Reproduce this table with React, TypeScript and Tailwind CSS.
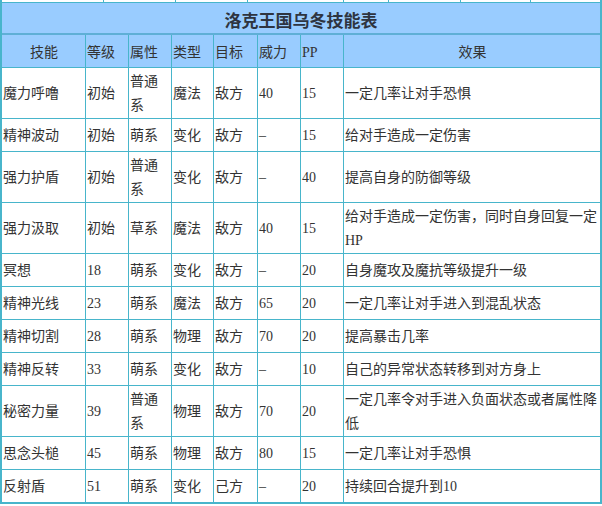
import React from 'react';

const rows: string[][] = [
  ['魔力呼噜', '初始', '普通系', '魔法', '敌方', '40', '15', '一定几率让对手恐惧'],
  ['精神波动', '初始', '萌系', '变化', '敌方', '–', '15', '给对手造成一定伤害'],
  ['强力护盾', '初始', '普通系', '变化', '敌方', '–', '40', '提高自身的防御等级'],
  ['强力汲取', '初始', '草系', '魔法', '敌方', '40', '15', '给对手造成一定伤害，同时自身回复一定HP'],
  ['冥想', '18', '萌系', '变化', '敌方', '–', '20', '自身魔攻及魔抗等级提升一级'],
  ['精神光线', '23', '萌系', '魔法', '敌方', '65', '20', '一定几率让对手进入到混乱状态'],
  ['精神切割', '28', '萌系', '物理', '敌方', '70', '20', '提高暴击几率'],
  ['精神反转', '33', '萌系', '变化', '敌方', '–', '10', '自己的异常状态转移到对方身上'],
  ['秘密力量', '39', '普通系', '物理', '敌方', '70', '20', '一定几率令对手进入负面状态或者属性降低'],
  ['思念头槌', '45', '萌系', '物理', '敌方', '80', '15', '一定几率让对手恐惧'],
  ['反射盾', '51', '萌系', '变化', '己方', '–', '20', '持续回合提升到10'],
];

const heads = ['技能', '等级', '属性', '类型', '目标', '威力', 'PP', '效果'];

export default function App() {
  return (
    <div className="w-[602px] h-[506px] bg-white text-[#333] font-['Liberation_Serif','Noto_Sans_CJK_SC',serif] text-[14px]">
      {/* tail of the table above */}
      <div className="flex h-[2px] border-x-2 border-[#48b5cb]">
        <div className="w-[102px] border-r border-[#48b5cb]" />
        <div className="w-[72px] border-r border-[#48b5cb]" />
        <div className="w-[72px] border-r border-[#48b5cb]" />
        <div className="w-[96px] border-r border-[#48b5cb]" />
        <div className="w-[45px] border-r border-[#48b5cb]" />
        <div className="w-[72px] border-r border-[#48b5cb]" />
        <div className="w-[70px] border-r border-[#48b5cb]" />
        <div className="flex-1" />
      </div>
      <div className="border-x-2 border-t border-b-2 border-[#48b5cb]">
        <div className="flex h-[32px] items-center justify-center border-b-2 border-[#5fafd6] bg-[#99ccff] pt-[3px] font-['Noto_Sans_CJK_SC',sans-serif] text-[17px] font-bold text-[#2e3440]">
          洛克王国乌冬技能表
        </div>
        <div className="grid grid-cols-[83px_42px_42px_41px_43px_42px_42px_256px] gap-px bg-[#48b5cb] leading-[24px]">
          {heads.map((h, i) => (
            <div
              key={h}
              className={
                'flex h-[32px] items-center bg-[#99ccff] pt-[4px] pl-px ' +
                (i === 0 || i === 7 ? 'justify-center' : '')
              }
            >
              {h}
            </div>
          ))}
          {rows.map((r) =>
            r.map((c, i) => (
              <div key={r[0] + i} className="flex min-h-[32px] items-center bg-white pt-[2px] pl-px">
                <span>{c}</span>
              </div>
            ))
          )}
        </div>
      </div>
    </div>
  );
}
